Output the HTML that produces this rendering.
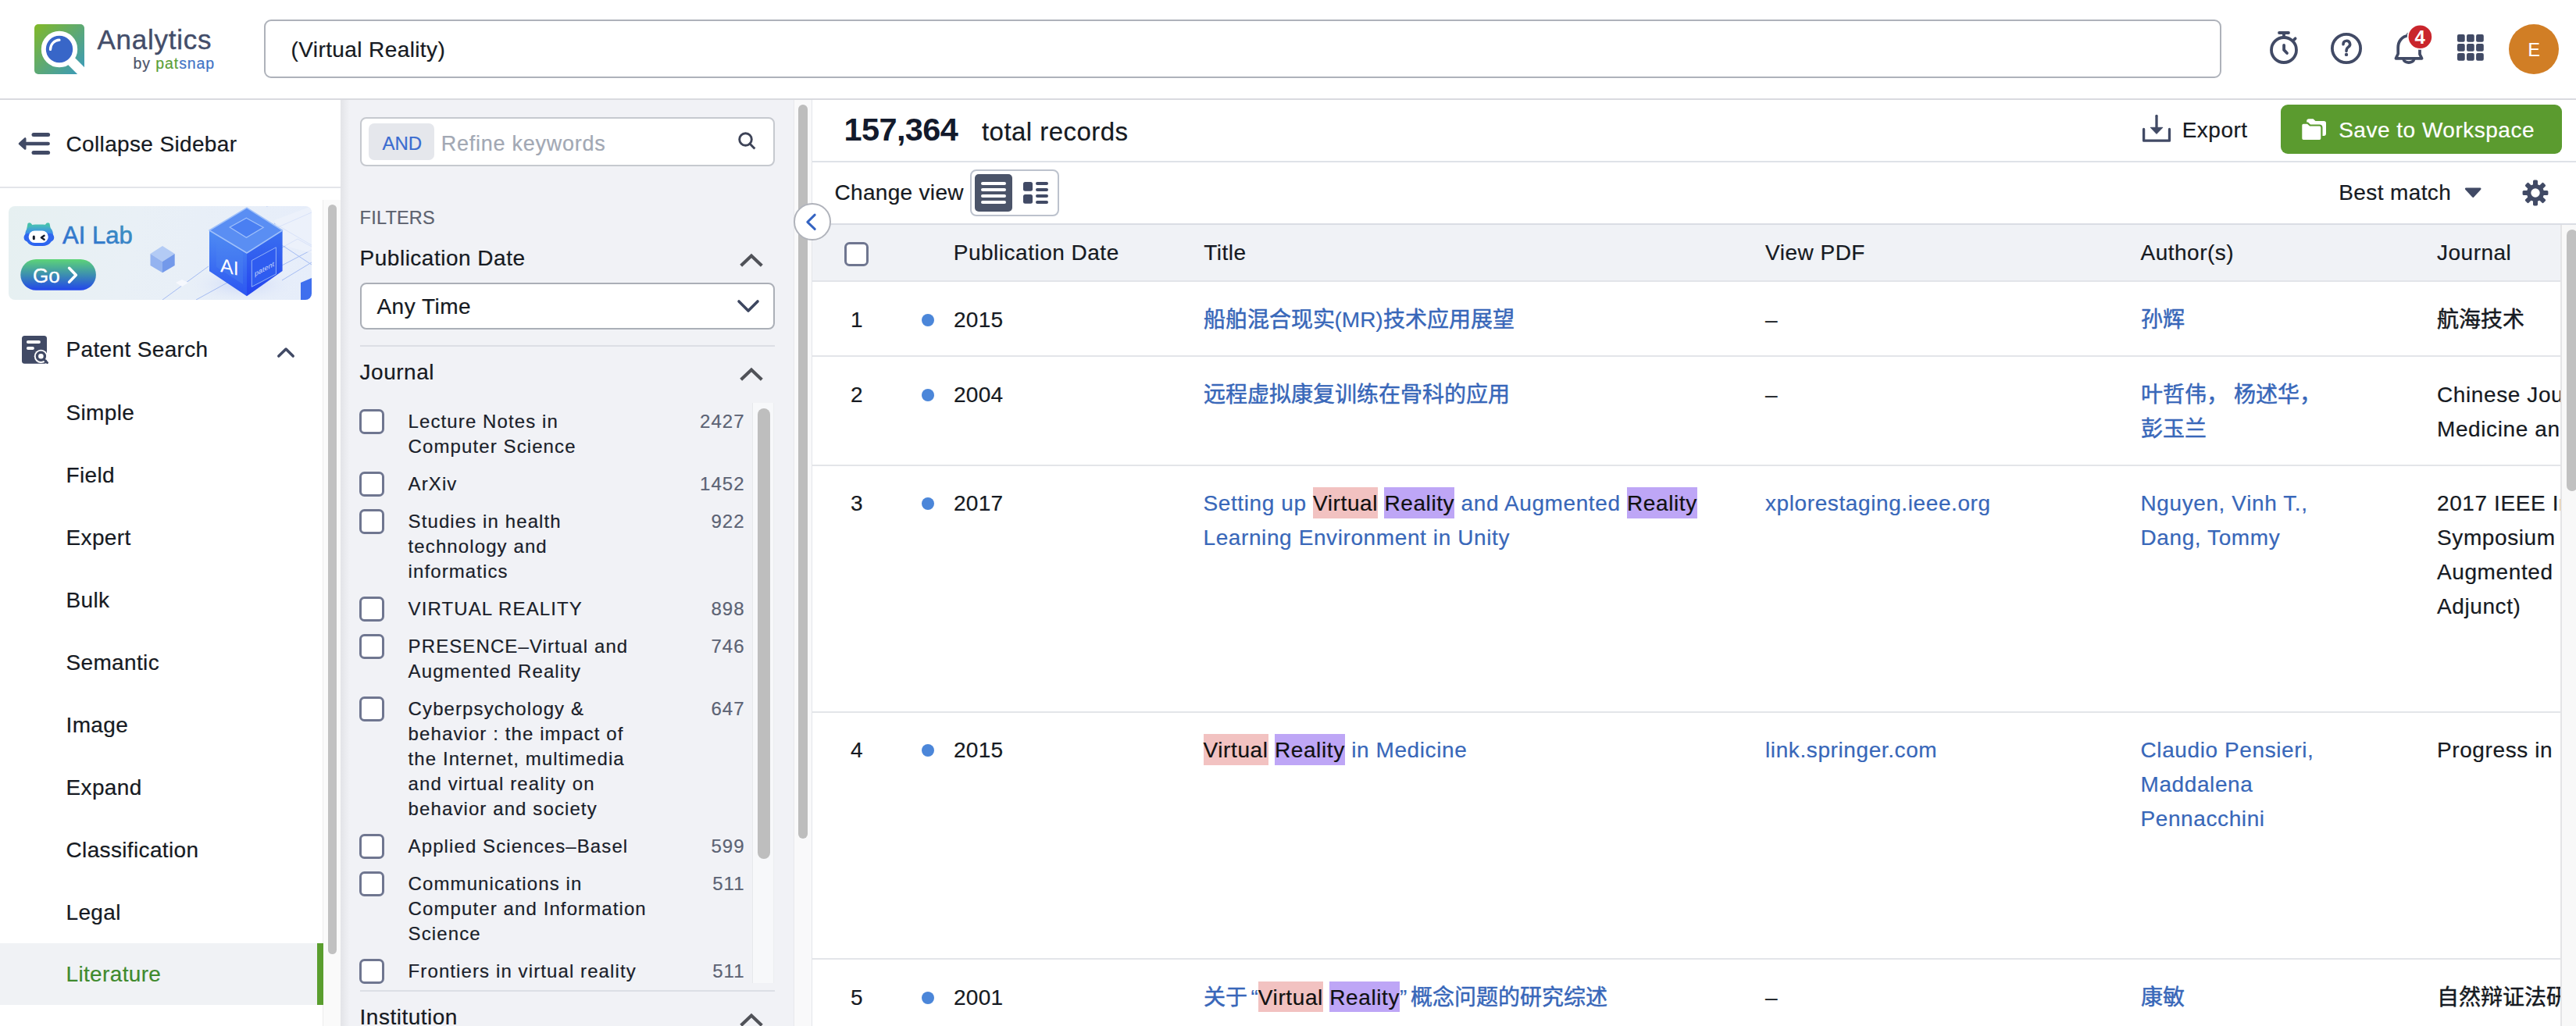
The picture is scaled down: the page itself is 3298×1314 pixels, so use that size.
<!DOCTYPE html><html lang="zh-CN"><head><meta charset="utf-8"><title>Analytics - Literature Search</title><style>*{margin:0;padding:0}
html,body{width:3298px;height:1314px;overflow:hidden;background:#fff}
body{position:relative;font-family:"Liberation Sans", sans-serif}
.a{position:absolute}
.cj{display:inline-block;width:28px;text-align:center;letter-spacing:0;-webkit-text-stroke-width:0.5px}
.t{position:absolute;white-space:nowrap;-webkit-text-stroke-width:0.2px}
.hp{background:#f2c2c1;color:#111;padding:5px 0 3.5px;letter-spacing:0.6px}
.hv{background:#bea6f6;color:#111;padding:5px 0 3.5px;letter-spacing:0.6px}
</style></head><body>
<div class="a" style="left:0px;top:0px;width:3298px;height:126px;background:#fff"></div>
<div class="a" style="left:0px;top:126px;width:3298px;height:2px;background:#d9dadf"></div>
<svg class="a" style="left:44px;top:31px;overflow:visible" width="64" height="64" viewBox="0 0 64 64">
<defs><linearGradient id="lg" x1="0" y1="0" x2="1" y2="1"><stop offset="0" stop-color="#82b927"/><stop offset="1" stop-color="#3899c0"/></linearGradient></defs>
<rect x="0" y="0" width="64" height="64" rx="5" fill="url(#lg)"/>
<line x1="36" y1="36" x2="72" y2="72" stroke="#fff" stroke-width="12.4"/>
<circle cx="32" cy="32" r="20.2" fill="#3866c8" stroke="#fff" stroke-width="6"/>
<path d="M20.5 32.5 A12 12 0 0 1 32 20.2" stroke="#fff" stroke-width="3.2" fill="none" stroke-linecap="round"/>
</svg>
<div class="a" style="left:108px;top:31px;width:20px;height:70px;background:#fff"></div>
<div class="t " style="left:124.5px;top:28.07px;font-size:35px;line-height:46px;color:#434d69;font-weight:400;letter-spacing:0.75px;-webkit-text-stroke:0.4px #434d69">Analytics</div>
<div class="t " style="left:170.6px;top:69.44px;font-size:19.5px;line-height:25px;color:#15181f;font-weight:400;letter-spacing:0.9px;"><span style="color:#4d546a">by </span><span style="color:#5c9f38">pat</span><span style="color:#4274c6">snap</span></div>
<div class="a" style="left:338px;top:25px;width:2506px;height:75px;box-sizing:border-box;border:2px solid #aeb2ba;border-radius:9px;background:#fff"></div>
<div class="t " style="left:372.5px;top:45.60px;font-size:28px;line-height:36px;color:#161a22;font-weight:400;letter-spacing:0.4px;">(Virtual Reality)</div>
<svg class="a" style="left:2900px;top:36px;" width="48" height="50" viewBox="0 0 48 50"><g fill="none" stroke="#414a65" stroke-width="3.8" stroke-linecap="round" stroke-linejoin="round">
<circle cx="24" cy="28" r="16"/><line x1="18" y1="6" x2="30" y2="6"/><line x1="24" y1="6" x2="24" y2="11"/>
<line x1="37" y1="14.8" x2="38.6" y2="13.3"/><polyline points="24.1,21.9 24.1,27.9 28,32"/></g></svg>
<svg class="a" style="left:2980px;top:38px;" width="48" height="48" viewBox="0 0 48 48"><g fill="none" stroke="#414a65" stroke-width="3.8" stroke-linecap="round">
<circle cx="24" cy="24" r="18.1"/><path d="M20 18.8 A4.3 4.3 0 1 1 26.3 22.4 C24.6 23.6 24 24.6 24 27.4" stroke-width="3.5"/></g>
<circle cx="24" cy="31.9" r="2.2" fill="#414a65"/></svg>
<svg class="a" style="left:3060px;top:30px;" width="60" height="60" viewBox="0 0 60 60"><g fill="none" stroke="#414a65" stroke-width="3.7" stroke-linecap="round" stroke-linejoin="round">
<path d="M10.2 39 L10.2 31 C10.2 22.5 15.5 16.5 23 15.6 L23 13.5 M23 15.6 C32 16.5 38 22 38 31 L38 39.5 L40.6 44.8 L7.4 44.8 L10.2 39"/>
<path d="M17.2 46 A6.8 4.9 0 0 0 30.6 46"/></g>
<circle cx="38.4" cy="17.2" r="16.6" fill="#fff"/><circle cx="38.4" cy="17.2" r="14.8" fill="#c9252c"/>
<text x="38.2" y="26" font-family="Liberation Sans" font-weight="700" font-size="24" fill="#fff" text-anchor="middle">4</text></svg>
<svg class="a" style="left:3146.2px;top:44px;" width="34" height="34" viewBox="0 0 34 34"><rect x="0.00" y="0.00" width="9.7" height="9.7" rx="2" fill="#414a65"/><rect x="12.05" y="0.00" width="9.7" height="9.7" rx="2" fill="#414a65"/><rect x="24.10" y="0.00" width="9.7" height="9.7" rx="2" fill="#414a65"/><rect x="0.00" y="12.05" width="9.7" height="9.7" rx="2" fill="#414a65"/><rect x="12.05" y="12.05" width="9.7" height="9.7" rx="2" fill="#414a65"/><rect x="24.10" y="12.05" width="9.7" height="9.7" rx="2" fill="#414a65"/><rect x="0.00" y="24.10" width="9.7" height="9.7" rx="2" fill="#414a65"/><rect x="12.05" y="24.10" width="9.7" height="9.7" rx="2" fill="#414a65"/><rect x="24.10" y="24.10" width="9.7" height="9.7" rx="2" fill="#414a65"/></svg>
<div class="a" style="left:3212px;top:30.5px;width:64px;height:64px;border-radius:50%;background:#d17e25"></div>
<div class="t " style="left:3236.5px;top:48.53px;font-size:23px;line-height:30px;color:#fff;font-weight:400;letter-spacing:0px;">E</div>
<div class="a" style="left:0px;top:128px;width:436px;height:1186px;background:#fff"></div>
<svg class="a" style="left:20px;top:160px;" width="50" height="50" viewBox="0 0 50 50"><g stroke="#414a65" stroke-linecap="round" fill="none">
<line x1="23" y1="12.5" x2="41.6" y2="12.5" stroke-width="5"/><line x1="14" y1="24" x2="41.6" y2="24" stroke-width="4.6"/>
<line x1="23" y1="35.5" x2="41.6" y2="35.5" stroke-width="5"/></g>
<path d="M5 24 L12.2 17.5 L12.2 30.5 Z" fill="#414a65" stroke="#414a65" stroke-width="2.6" stroke-linejoin="round"/></svg>
<div class="t " style="left:84.5px;top:166.50px;font-size:28px;line-height:36px;color:#161a22;font-weight:400;letter-spacing:0.35px;">Collapse Sidebar</div>
<div class="a" style="left:0px;top:239px;width:436px;height:2px;background:#e3e5ea"></div>
<div class="a" style="left:11px;top:264px;width:388px;height:120px;border-radius:8px;overflow:hidden;background:linear-gradient(100deg,#e6f0f1 0%,#e9f0f6 40%,#e6edfa 100%)">
<svg width="388" height="120" viewBox="0 0 388 120" style="position:absolute;left:0;top:0">
<defs>
<linearGradient id="cl" x1="0" y1="0" x2="0" y2="1"><stop offset="0" stop-color="#4f8cf3"/><stop offset="1" stop-color="#2b55f1"/></linearGradient>
<linearGradient id="cr" x1="0" y1="0" x2="0" y2="1"><stop offset="0" stop-color="#3a70f0"/><stop offset="1" stop-color="#2444ee"/></linearGradient>
<linearGradient id="al" x1="0" y1="1" x2="1" y2="0"><stop offset="0" stop-color="#2d6bd3"/><stop offset="1" stop-color="#3d96bd"/></linearGradient>
<linearGradient id="go" x1="0" y1="0" x2="0" y2="1"><stop offset="0" stop-color="#5dd477"/><stop offset="0.45" stop-color="#3f96aa"/><stop offset="1" stop-color="#2245ec"/></linearGradient>
<linearGradient id="rb" x1="0" y1="0" x2="0" y2="1"><stop offset="0" stop-color="#49c2b4"/><stop offset="0.45" stop-color="#3a86ef"/><stop offset="1" stop-color="#2a5ef0"/></linearGradient>
<radialGradient id="sh" cx="0.5" cy="0.5" r="0.5"><stop offset="0" stop-color="#c9d6f7"/><stop offset="1" stop-color="#e8eefa" stop-opacity="0"/></radialGradient>
</defs>
<ellipse cx="300" cy="100" rx="70" ry="25" fill="url(#sh)"/>
<g stroke="#8eaaf0" stroke-width="1" fill="none" opacity="0.75">
<path d="M197 120 L256 77"/><path d="M240 120 L280 98"/><path d="M330 0 L388 -10 M338 30 L388 8"/><path d="M340 22 L388 50"/>
<path d="M334 62 L370 42 L388 52 M346 78 L388 56 M350 95 L388 72"/><path d="M350 50 L388 75"/>
</g>
<path d="M214 98 L222 94 L230 98 L222 103 Z" fill="#f6f8fd"/>
<path d="M340 18 L388 0 L388 60 L350 50 Z" fill="#eef2fb" opacity="0.7"/>
<!-- big cube -->
<path d="M305 2.2 L350.6 31 L305 60 L257 31 Z" fill="#5a8ef3"/>
<path d="M257 31 L305 60 L305 115.2 L257 83.3 Z" fill="url(#cl)"/>
<path d="M305 60 L350.6 31 L350.6 83 L305 115.2 Z" fill="url(#cr)"/>
<path d="M305 2.2 L350.6 31 L305 60 L257 31 Z" fill="none" stroke="#9ec0fa" stroke-width="1.5" stroke-linejoin="round"/>
<path d="M304.4 15.3 L326.2 27.2 L304.4 40.3 L283.2 27 Z" fill="#4a7ff2" stroke="#9fc0fa" stroke-width="1.2"/>
<path d="M266 38 L300 60 L300 100 L266 78 Z" fill="#4c86f2" opacity="0.35"/>
<text x="0" y="0" font-family="Liberation Sans" font-size="25" fill="#fff" transform="translate(271 84) skewY(12)">AI</text>
<path d="M311.3 69.6 L342.4 52.8 L342.4 87 L311.3 103.3 Z" fill="#2f5cf0" stroke="#93b2f7" stroke-width="1"/>
<text x="0" y="0" font-family="Liberation Sans" font-size="9" fill="#c9d9fb" transform="translate(315 90) skewY(-28)">patent</text>
<!-- small cube -->
<path d="M197 50.9 L212.7 61 L197 70.9 L181.5 60.9 Z" fill="#b3cbf5"/>
<path d="M181.5 60.9 L197 70.9 L197 85.2 L181.5 75.9 Z" fill="#94b3f0"/>
<path d="M197 70.9 L212.7 61 L212.7 76 L197 85.2 Z" fill="#7399ea"/>
<path d="M374 98 L388 92 L388 120 L374 120 Z" fill="#3f6fee"/>
<!-- robot -->
<path d="M23 30 L24.5 22.5 Q26 20.2 28.5 21.8 L32 26 Z" fill="#46c0ac"/><path d="M54 30 L52.5 22.5 Q51 20.2 48.5 21.8 L45 26 Z" fill="#46c0ac"/>
<rect x="21.2" y="23.6" width="35.8" height="27.4" rx="13" fill="url(#rb)"/>
<rect x="19.6" y="35" width="38.6" height="10.5" rx="5" fill="#2f66ee"/>
<rect x="25.7" y="31.6" width="25" height="15.4" rx="7.6" fill="#fff"/>
<rect x="30.8" y="37.4" width="3" height="5.8" rx="1.5" fill="#141c2c"/>
<path d="M45.6 37.8 L41.9 40.3 L45.6 42.8" stroke="#141c2c" stroke-width="2.4" fill="none" stroke-linecap="round" stroke-linejoin="round"/>
<text x="69" y="48" font-family="Liberation Sans" font-size="31" font-weight="400" fill="url(#al)" stroke="url(#al)" stroke-width="0.6">AI Lab</text>
<rect x="15.3" y="68" width="96.6" height="39.8" rx="19.9" fill="url(#go)"/>
<text x="31" y="97.7" font-family="Liberation Sans" font-size="26" font-weight="400" fill="#fff" stroke="#fff" stroke-width="0.35">Go</text>
<path d="M77.6 79.3 L86.3 88.3 L77.6 97.3" stroke="#fff" stroke-width="3.6" fill="none" stroke-linecap="round" stroke-linejoin="round"/>
</svg></div>
<div class="a" style="left:413px;top:256px;width:23px;height:1058px;background:#fafafa;border-left:1px solid #ececec;box-sizing:border-box"></div>
<div class="a" style="left:419.5px;top:262px;width:11px;height:960px;background:#c1c1c1;border-radius:6px"></div>
<svg class="a" style="left:26px;top:428px;" width="40" height="40" viewBox="0 0 40 40"><rect x="2" y="2" width="32" height="35.8" rx="3.5" fill="#414a65"/>
<line x1="9.9" y1="9.9" x2="23.9" y2="9.9" stroke="#fff" stroke-width="4" stroke-linecap="round"/>
<line x1="9.9" y1="18" x2="15.9" y2="18" stroke="#fff" stroke-width="4" stroke-linecap="round"/>
<circle cx="26.4" cy="28.3" r="8.6" fill="#fff"/><circle cx="26.4" cy="28.3" r="5" fill="none" stroke="#414a65" stroke-width="3.4"/>
<line x1="30.5" y1="32.5" x2="34.5" y2="36.5" stroke="#414a65" stroke-width="3" stroke-linecap="round"/></svg>
<div class="t " style="left:84.5px;top:430.30px;font-size:28px;line-height:36px;color:#161a22;font-weight:400;letter-spacing:0.35px;">Patent Search</div>
<svg class="a" style="left:350px;top:440px;" width="30" height="22" viewBox="0 0 30 22"><polyline points="6.8,16.1 16.1,7 25.2,16.1" fill="none" stroke="#414a65" stroke-width="3.5" stroke-linecap="round" stroke-linejoin="round"/></svg>
<div class="t " style="left:84.5px;top:510.60px;font-size:28px;line-height:36px;color:#161a22;font-weight:400;letter-spacing:0.35px;">Simple</div>
<div class="t " style="left:84.5px;top:590.60px;font-size:28px;line-height:36px;color:#161a22;font-weight:400;letter-spacing:0.35px;">Field</div>
<div class="t " style="left:84.5px;top:670.60px;font-size:28px;line-height:36px;color:#161a22;font-weight:400;letter-spacing:0.35px;">Expert</div>
<div class="t " style="left:84.5px;top:750.60px;font-size:28px;line-height:36px;color:#161a22;font-weight:400;letter-spacing:0.35px;">Bulk</div>
<div class="t " style="left:84.5px;top:830.60px;font-size:28px;line-height:36px;color:#161a22;font-weight:400;letter-spacing:0.35px;">Semantic</div>
<div class="t " style="left:84.5px;top:910.60px;font-size:28px;line-height:36px;color:#161a22;font-weight:400;letter-spacing:0.35px;">Image</div>
<div class="t " style="left:84.5px;top:990.60px;font-size:28px;line-height:36px;color:#161a22;font-weight:400;letter-spacing:0.35px;">Expand</div>
<div class="t " style="left:84.5px;top:1070.60px;font-size:28px;line-height:36px;color:#161a22;font-weight:400;letter-spacing:0.35px;">Classification</div>
<div class="t " style="left:84.5px;top:1150.60px;font-size:28px;line-height:36px;color:#161a22;font-weight:400;letter-spacing:0.35px;">Legal</div>
<div class="a" style="left:0px;top:1208px;width:413px;height:79px;background:#f0f2f5"></div>
<div class="a" style="left:406px;top:1208px;width:8px;height:79px;background:#5a9e2e"></div>
<div class="t " style="left:84.5px;top:1229.80px;font-size:28px;line-height:36px;color:#3f8a2d;font-weight:400;letter-spacing:0.35px;">Literature</div>
<div class="a" style="left:436px;top:128px;width:580px;height:1186px;background:#f1f2f6"></div>
<div class="a" style="left:436px;top:128px;width:12px;height:1186px;background:linear-gradient(90deg,#e3e4e8,#f1f2f6)"></div>
<div class="a" style="left:460.5px;top:149.8px;width:531px;height:63.6px;box-sizing:border-box;border:2px solid #c6c9cf;border-radius:8px;background:#fff"></div>
<div class="a" style="left:472px;top:158.3px;width:83.7px;height:47px;background:#e5e7ec;border-radius:7px"></div>
<div class="t " style="left:489.5px;top:167.78px;font-size:24px;line-height:31px;color:#3b6cd0;font-weight:400;letter-spacing:0px;">AND</div>
<div class="t " style="left:564.7px;top:166.64px;font-size:27px;line-height:35px;color:#a2a8b4;font-weight:400;letter-spacing:0.75px;">Refine keywords</div>
<svg class="a" style="left:940px;top:166px;" width="30" height="28" viewBox="0 0 30 28"><circle cx="14.5" cy="12.5" r="7.8" fill="none" stroke="#3d4357" stroke-width="2.9"/><line x1="20.2" y1="18.3" x2="25.3" y2="23.4" stroke="#3d4357" stroke-width="2.9" stroke-linecap="square"/></svg>
<div class="t " style="left:460.6px;top:264.06px;font-size:23.5px;line-height:31px;color:#5c616e;font-weight:400;letter-spacing:0.2px;">FILTERS</div>
<div class="t " style="left:460.6px;top:313.00px;font-size:28px;line-height:36px;color:#161a22;font-weight:400;letter-spacing:0.5px;">Publication Date</div>
<svg class="a" style="left:945px;top:322px;" width="34" height="22" viewBox="0 0 34 22"><polyline points="5.2,16.8 17,5.6 28.8,16.8" fill="none" stroke="#505258" stroke-width="4.2" stroke-linecap="square"/></svg>
<div class="a" style="left:460.5px;top:361.6px;width:531px;height:60px;box-sizing:border-box;border:2px solid #abafb7;border-radius:8px;background:#fff"></div>
<div class="t " style="left:482.4px;top:374.80px;font-size:28px;line-height:36px;color:#161a22;font-weight:400;letter-spacing:0.5px;">Any Time</div>
<svg class="a" style="left:940px;top:380px;" width="36" height="24" viewBox="0 0 36 24"><polyline points="6,6 18,18 30,6" fill="none" stroke="#3d4760" stroke-width="3.6" stroke-linecap="round" stroke-linejoin="round"/></svg>
<div class="a" style="left:460.5px;top:442px;width:531px;height:2px;background:#dcdfe5"></div>
<div class="t " style="left:460.6px;top:458.50px;font-size:28px;line-height:36px;color:#161a22;font-weight:400;letter-spacing:0.5px;">Journal</div>
<svg class="a" style="left:945px;top:468px;" width="34" height="22" viewBox="0 0 34 22"><polyline points="5.2,16.8 17,5.6 28.8,16.8" fill="none" stroke="#505258" stroke-width="4.2" stroke-linecap="square"/></svg>
<div class="a" style="left:963px;top:516px;width:28px;height:743px;background:#f7f8fa;border-left:1px solid #e6e8ec;border-right:1px solid #eceef1;box-sizing:border-box"></div>
<div class="a" style="left:970.3px;top:523px;width:15.5px;height:577px;background:#bebebe;border-radius:8px"></div>
<div class="a" style="left:460.3px;top:524.2px;width:31.5px;height:31.5px;box-sizing:border-box;border:3.5px solid #6f7690;border-radius:6.5px;background:#fff"></div>
<div class="t " style="left:522.6px;top:524.38px;font-size:24px;line-height:31px;color:#1a1e2a;font-weight:400;letter-spacing:1.1px;">Lecture Notes in</div>
<div class="t " style="left:522.6px;top:556.38px;font-size:24px;line-height:31px;color:#1a1e2a;font-weight:400;letter-spacing:1.1px;">Computer Science</div>
<div class="t" style="right:2344.5px;top:524.38px;font-size:24px;line-height:31px;color:#5c6374;font-weight:400;letter-spacing:1.0px;text-align:right;">2427</div>
<div class="a" style="left:460.3px;top:604.2px;width:31.5px;height:31.5px;box-sizing:border-box;border:3.5px solid #6f7690;border-radius:6.5px;background:#fff"></div>
<div class="t " style="left:522.6px;top:604.38px;font-size:24px;line-height:31px;color:#1a1e2a;font-weight:400;letter-spacing:1.1px;">ArXiv</div>
<div class="t" style="right:2344.5px;top:604.38px;font-size:24px;line-height:31px;color:#5c6374;font-weight:400;letter-spacing:1.0px;text-align:right;">1452</div>
<div class="a" style="left:460.3px;top:652.2px;width:31.5px;height:31.5px;box-sizing:border-box;border:3.5px solid #6f7690;border-radius:6.5px;background:#fff"></div>
<div class="t " style="left:522.6px;top:652.38px;font-size:24px;line-height:31px;color:#1a1e2a;font-weight:400;letter-spacing:1.1px;">Studies in health</div>
<div class="t " style="left:522.6px;top:684.38px;font-size:24px;line-height:31px;color:#1a1e2a;font-weight:400;letter-spacing:1.1px;">technology and</div>
<div class="t " style="left:522.6px;top:716.38px;font-size:24px;line-height:31px;color:#1a1e2a;font-weight:400;letter-spacing:1.1px;">informatics</div>
<div class="t" style="right:2344.5px;top:652.38px;font-size:24px;line-height:31px;color:#5c6374;font-weight:400;letter-spacing:1.0px;text-align:right;">922</div>
<div class="a" style="left:460.3px;top:764.2px;width:31.5px;height:31.5px;box-sizing:border-box;border:3.5px solid #6f7690;border-radius:6.5px;background:#fff"></div>
<div class="t " style="left:522.6px;top:764.38px;font-size:24px;line-height:31px;color:#1a1e2a;font-weight:400;letter-spacing:1.1px;">VIRTUAL REALITY</div>
<div class="t" style="right:2344.5px;top:764.38px;font-size:24px;line-height:31px;color:#5c6374;font-weight:400;letter-spacing:1.0px;text-align:right;">898</div>
<div class="a" style="left:460.3px;top:812.2px;width:31.5px;height:31.5px;box-sizing:border-box;border:3.5px solid #6f7690;border-radius:6.5px;background:#fff"></div>
<div class="t " style="left:522.6px;top:812.38px;font-size:24px;line-height:31px;color:#1a1e2a;font-weight:400;letter-spacing:1.1px;">PRESENCE–Virtual and</div>
<div class="t " style="left:522.6px;top:844.38px;font-size:24px;line-height:31px;color:#1a1e2a;font-weight:400;letter-spacing:1.1px;">Augmented Reality</div>
<div class="t" style="right:2344.5px;top:812.38px;font-size:24px;line-height:31px;color:#5c6374;font-weight:400;letter-spacing:1.0px;text-align:right;">746</div>
<div class="a" style="left:460.3px;top:892.2px;width:31.5px;height:31.5px;box-sizing:border-box;border:3.5px solid #6f7690;border-radius:6.5px;background:#fff"></div>
<div class="t " style="left:522.6px;top:892.38px;font-size:24px;line-height:31px;color:#1a1e2a;font-weight:400;letter-spacing:1.1px;">Cyberpsychology &amp;</div>
<div class="t " style="left:522.6px;top:924.38px;font-size:24px;line-height:31px;color:#1a1e2a;font-weight:400;letter-spacing:1.1px;">behavior : the impact of</div>
<div class="t " style="left:522.6px;top:956.38px;font-size:24px;line-height:31px;color:#1a1e2a;font-weight:400;letter-spacing:1.1px;">the Internet, multimedia</div>
<div class="t " style="left:522.6px;top:988.38px;font-size:24px;line-height:31px;color:#1a1e2a;font-weight:400;letter-spacing:1.1px;">and virtual reality on</div>
<div class="t " style="left:522.6px;top:1020.38px;font-size:24px;line-height:31px;color:#1a1e2a;font-weight:400;letter-spacing:1.1px;">behavior and society</div>
<div class="t" style="right:2344.5px;top:892.38px;font-size:24px;line-height:31px;color:#5c6374;font-weight:400;letter-spacing:1.0px;text-align:right;">647</div>
<div class="a" style="left:460.3px;top:1068.2px;width:31.5px;height:31.5px;box-sizing:border-box;border:3.5px solid #6f7690;border-radius:6.5px;background:#fff"></div>
<div class="t " style="left:522.6px;top:1068.38px;font-size:24px;line-height:31px;color:#1a1e2a;font-weight:400;letter-spacing:1.1px;">Applied Sciences–Basel</div>
<div class="t" style="right:2344.5px;top:1068.38px;font-size:24px;line-height:31px;color:#5c6374;font-weight:400;letter-spacing:1.0px;text-align:right;">599</div>
<div class="a" style="left:460.3px;top:1116.2px;width:31.5px;height:31.5px;box-sizing:border-box;border:3.5px solid #6f7690;border-radius:6.5px;background:#fff"></div>
<div class="t " style="left:522.6px;top:1116.38px;font-size:24px;line-height:31px;color:#1a1e2a;font-weight:400;letter-spacing:1.1px;">Communications in</div>
<div class="t " style="left:522.6px;top:1148.38px;font-size:24px;line-height:31px;color:#1a1e2a;font-weight:400;letter-spacing:1.1px;">Computer and Information</div>
<div class="t " style="left:522.6px;top:1180.38px;font-size:24px;line-height:31px;color:#1a1e2a;font-weight:400;letter-spacing:1.1px;">Science</div>
<div class="t" style="right:2344.5px;top:1116.38px;font-size:24px;line-height:31px;color:#5c6374;font-weight:400;letter-spacing:1.0px;text-align:right;">511</div>
<div class="a" style="left:460.3px;top:1228.2px;width:31.5px;height:31.5px;box-sizing:border-box;border:3.5px solid #6f7690;border-radius:6.5px;background:#fff"></div>
<div class="t " style="left:522.6px;top:1228.38px;font-size:24px;line-height:31px;color:#1a1e2a;font-weight:400;letter-spacing:1.1px;">Frontiers in virtual reality</div>
<div class="t" style="right:2344.5px;top:1228.38px;font-size:24px;line-height:31px;color:#5c6374;font-weight:400;letter-spacing:1.0px;text-align:right;">511</div>
<div class="a" style="left:460.5px;top:1268px;width:531px;height:2px;background:#dcdfe5"></div>
<div class="t " style="left:460.6px;top:1284.80px;font-size:28px;line-height:36px;color:#161a22;font-weight:400;letter-spacing:0.5px;">Institution</div>
<svg class="a" style="left:945px;top:1294.5px;" width="34" height="22" viewBox="0 0 34 22"><polyline points="5.2,16.8 17,5.6 28.8,16.8" fill="none" stroke="#505258" stroke-width="4.2" stroke-linecap="square"/></svg>
<div class="a" style="left:1016px;top:128px;width:24px;height:1186px;background:#f9f9fa;border-left:1px solid #e8e9ec;border-right:1px solid #e4e6ea;box-sizing:border-box"></div>
<div class="a" style="left:1022px;top:134px;width:12px;height:940px;background:#bdbdbd;border-radius:6px"></div>
<div class="a" style="left:1040px;top:128px;width:2258px;height:1186px;background:#fff"></div>
<div class="t " style="left:1080.5px;top:139.02px;font-size:41.5px;line-height:54px;color:#131a2c;font-weight:700;letter-spacing:-0.6px;-webkit-text-stroke-width:0">157,364</div>
<div class="t " style="left:1257px;top:147.47px;font-size:33px;line-height:43px;color:#161a22;font-weight:400;letter-spacing:0.45px;">total records</div>
<svg class="a" style="left:2738px;top:144px;" width="46" height="42" viewBox="0 0 46 42"><g fill="none" stroke="#414a65" stroke-width="3.3" stroke-linecap="round" stroke-linejoin="round">
<path d="M6.6 21.5 L6.6 36.2 L39.5 36.2 L39.5 21.5"/><line x1="23" y1="4.3" x2="23" y2="20"/></g>
<path d="M15.2 19.3 L30.9 19.3 L23 27.4 Z" fill="#414a65" stroke="#414a65" stroke-width="1" stroke-linejoin="round"/></svg>
<div class="t " style="left:2793.7px;top:148.60px;font-size:28px;line-height:36px;color:#161a22;font-weight:400;letter-spacing:0.5px;">Export</div>
<div class="a" style="left:2920px;top:134px;width:359.6px;height:63.2px;background:#5b9b2f;border-radius:9px"></div>
<svg class="a" style="left:2944px;top:149px;" width="38" height="34" viewBox="0 0 38 34"><path d="M9.2 6 Q9.2 3.2 12 3.2 L17.5 3.2 L20.5 6 L31.2 6 Q34 6 34 8.8 L34 22 Q34 24.9 31.2 24.9 L12 24.9 Q9.2 24.9 9.2 22 Z" fill="#fff"/>
<path d="M2.2 11.5 Q2.2 8.7 5 8.7 L10.5 8.7 L13.5 11.5 L25.6 11.5 Q28.4 11.5 28.4 14.3 L28.4 28.2 Q28.4 31 25.6 31 L5 31 Q2.2 31 2.2 28.2 Z" fill="#fff" stroke="#5b9b2f" stroke-width="2.2"/></svg>
<div class="t " style="left:2994.2px;top:148.60px;font-size:28px;line-height:36px;color:#fff;font-weight:400;letter-spacing:0.5px;">Save to Workspace</div>
<div class="a" style="left:1040px;top:206px;width:2258px;height:2px;background:#dfe2e8"></div>
<div class="t " style="left:1068.6px;top:228.80px;font-size:28px;line-height:36px;color:#161a22;font-weight:400;letter-spacing:0.3px;">Change view</div>
<div class="a" style="left:1242.3px;top:217px;width:113.3px;height:59.5px;box-sizing:border-box;border:2px solid #bcc2cd;border-radius:8px;background:#fff"></div>
<div class="a" style="left:1248px;top:223px;width:47.7px;height:48px;background:#4b5469;border-radius:5px"></div>
<svg class="a" style="left:1248px;top:223px;" width="48" height="48" viewBox="0 0 48 48"><rect x="8" y="10.0" width="32" height="4" rx="2" fill="#fff"/><rect x="8" y="18.0" width="32" height="4" rx="2" fill="#fff"/><rect x="8" y="26.0" width="32" height="4" rx="2" fill="#fff"/><rect x="8" y="34.0" width="32" height="4" rx="2" fill="#fff"/></svg>
<svg class="a" style="left:1308px;top:230px;" width="40" height="34" viewBox="0 0 40 34"><rect x="2" y="3" width="12" height="11.7" rx="2.5" fill="#414a65"/><rect x="2" y="19.1" width="12" height="11.7" rx="2.5" fill="#414a65"/>
<rect x="18" y="2.9" width="16" height="4" rx="2" fill="#414a65"/><rect x="18" y="10.9" width="16" height="4" rx="2" fill="#414a65"/>
<rect x="18" y="18.9" width="16" height="4" rx="2" fill="#414a65"/><rect x="18" y="27" width="16" height="4" rx="2" fill="#414a65"/></svg>
<div class="t " style="left:2994.2px;top:229.10px;font-size:28px;line-height:36px;color:#161a22;font-weight:400;letter-spacing:0.4px;">Best match</div>
<svg class="a" style="left:3152px;top:236px;" width="28" height="20" viewBox="0 0 28 20"><path d="M5.2 5.8 L23.2 5.8 L14.2 15.6 Z" fill="#414a65" stroke="#414a65" stroke-width="2.6" stroke-linejoin="round"/></svg>
<svg class="a" style="left:3226px;top:227px;" width="40" height="40" viewBox="0 0 40 40"><g fill="#414a65"><rect x="17" y="3.6" width="6" height="9" rx="1.6" transform="rotate(0 20 20)"/><rect x="17" y="3.6" width="6" height="9" rx="1.6" transform="rotate(45 20 20)"/><rect x="17" y="3.6" width="6" height="9" rx="1.6" transform="rotate(90 20 20)"/><rect x="17" y="3.6" width="6" height="9" rx="1.6" transform="rotate(135 20 20)"/><rect x="17" y="3.6" width="6" height="9" rx="1.6" transform="rotate(180 20 20)"/><rect x="17" y="3.6" width="6" height="9" rx="1.6" transform="rotate(225 20 20)"/><rect x="17" y="3.6" width="6" height="9" rx="1.6" transform="rotate(270 20 20)"/><rect x="17" y="3.6" width="6" height="9" rx="1.6" transform="rotate(315 20 20)"/></g><circle cx="20" cy="20" r="8.4" fill="none" stroke="#414a65" stroke-width="5.4"/></svg>
<div class="a" style="left:1040px;top:286px;width:2258px;height:2px;background:#dadde4"></div>
<div class="a" style="left:1040px;top:288px;width:2238px;height:72px;background:#f0f2f6"></div>
<div class="a" style="left:1040px;top:359px;width:2238px;height:2px;background:#e2e4e9"></div>
<div class="a" style="left:1080.5px;top:309.5px;width:31.5px;height:31.5px;box-sizing:border-box;border:3.5px solid #6f7690;border-radius:6.5px;background:#fff"></div>
<div class="t " style="left:1220.8px;top:306.30px;font-size:28px;line-height:36px;color:#161a22;font-weight:400;letter-spacing:0.5px;">Publication Date</div>
<div class="t " style="left:1541.2px;top:306.30px;font-size:28px;line-height:36px;color:#161a22;font-weight:400;letter-spacing:0.5px;">Title</div>
<div class="t " style="left:2260px;top:306.30px;font-size:28px;line-height:36px;color:#161a22;font-weight:400;letter-spacing:0.5px;">View PDF</div>
<div class="t " style="left:2740.5px;top:306.30px;font-size:28px;line-height:36px;color:#161a22;font-weight:400;letter-spacing:0.5px;">Author(s)</div>
<div class="t " style="left:3120px;top:306.30px;font-size:28px;line-height:36px;color:#161a22;font-weight:400;letter-spacing:0.5px;">Journal</div>
<div class="a" style="left:1040px;top:361px;width:2238px;height:953px;overflow:hidden">
<div class="t " style="left:49px;top:26.50px;font-size:28px;line-height:44px;color:#161a22;font-weight:400;letter-spacing:0px;">1</div>
<div class="a" style="left:140px;top:40.89999999999998px;width:16px;height:16px;border-radius:50%;background:#4b86d9"></div>
<div class="t " style="left:181px;top:26.50px;font-size:28px;line-height:44px;color:#161a22;font-weight:400;letter-spacing:0.3px;">2015</div>
<div class="t " style="left:500.5px;top:26.50px;font-size:28px;line-height:44px;color:#3867b9;font-weight:400;letter-spacing:0px;"><span class="cj">船</span><span class="cj">舶</span><span class="cj">混</span><span class="cj">合</span><span class="cj">现</span><span class="cj">实</span>(MR)<span class="cj">技</span><span class="cj">术</span><span class="cj">应</span><span class="cj">用</span><span class="cj">展</span><span class="cj">望</span></div>
<div class="t " style="left:1220px;top:26.50px;font-size:28px;line-height:44px;color:#161a22;font-weight:400;letter-spacing:0.6px;">–</div>
<div class="t " style="left:1700.5px;top:26.50px;font-size:28px;line-height:44px;color:#3867b9;font-weight:400;letter-spacing:0px;"><span class="cj">孙</span><span class="cj">辉</span></div>
<div class="t " style="left:2080px;top:26.50px;font-size:28px;line-height:44px;color:#161a22;font-weight:400;letter-spacing:0px;"><span class="cj">航</span><span class="cj">海</span><span class="cj">技</span><span class="cj">术</span></div>
<div class="a" style="left:0px;top:94px;width:2238px;height:2px;background:#e3e5e9"></div>
<div class="t " style="left:49px;top:122.50px;font-size:28px;line-height:44px;color:#161a22;font-weight:400;letter-spacing:0px;">2</div>
<div class="a" style="left:140px;top:136.90000000000003px;width:16px;height:16px;border-radius:50%;background:#4b86d9"></div>
<div class="t " style="left:181px;top:122.50px;font-size:28px;line-height:44px;color:#161a22;font-weight:400;letter-spacing:0.3px;">2004</div>
<div class="t " style="left:500.5px;top:122.50px;font-size:28px;line-height:44px;color:#3867b9;font-weight:400;letter-spacing:0px;"><span class="cj">远</span><span class="cj">程</span><span class="cj">虚</span><span class="cj">拟</span><span class="cj">康</span><span class="cj">复</span><span class="cj">训</span><span class="cj">练</span><span class="cj">在</span><span class="cj">骨</span><span class="cj">科</span><span class="cj">的</span><span class="cj">应</span><span class="cj">用</span></div>
<div class="t " style="left:1220px;top:122.50px;font-size:28px;line-height:44px;color:#161a22;font-weight:400;letter-spacing:0.6px;">–</div>
<div class="t " style="left:1700.5px;top:122.50px;font-size:28px;line-height:44px;color:#3867b9;font-weight:400;letter-spacing:0px;"><span class="cj">叶</span><span class="cj">哲</span><span class="cj">伟</span><span class="cj">，</span>&nbsp;<span class="cj">杨</span><span class="cj">述</span><span class="cj">华</span><span class="cj">，</span></div>
<div class="t " style="left:1700.5px;top:166.50px;font-size:28px;line-height:44px;color:#3867b9;font-weight:400;letter-spacing:0px;"><span class="cj">彭</span><span class="cj">玉</span><span class="cj">兰</span></div>
<div class="t " style="left:2080px;top:122.50px;font-size:28px;line-height:44px;color:#161a22;font-weight:400;letter-spacing:0.6px;">Chinese Journal of Clinical</div>
<div class="t " style="left:2080px;top:166.50px;font-size:28px;line-height:44px;color:#161a22;font-weight:400;letter-spacing:0.6px;">Medicine and Rehabilitation</div>
<div class="a" style="left:0px;top:233.5px;width:2238px;height:2px;background:#e3e5e9"></div>
<div class="t " style="left:49px;top:262.00px;font-size:28px;line-height:44px;color:#161a22;font-weight:400;letter-spacing:0px;">3</div>
<div class="a" style="left:140px;top:276.4000000000001px;width:16px;height:16px;border-radius:50%;background:#4b86d9"></div>
<div class="t " style="left:181px;top:262.00px;font-size:28px;line-height:44px;color:#161a22;font-weight:400;letter-spacing:0.3px;">2017</div>
<div class="t " style="left:500.5px;top:262.00px;font-size:28px;line-height:44px;color:#3867b9;font-weight:400;letter-spacing:0.6px;">Setting up <span class="hp">Virtual</span> <span class="hv">Reality</span> and Augmented <span class="hv">Reality</span></div>
<div class="t " style="left:500.5px;top:306.00px;font-size:28px;line-height:44px;color:#3867b9;font-weight:400;letter-spacing:0.6px;">Learning Environment in Unity</div>
<div class="t " style="left:1220px;top:262.00px;font-size:28px;line-height:44px;color:#3867b9;font-weight:400;letter-spacing:0.6px;">xplorestaging.ieee.org</div>
<div class="t " style="left:1700.5px;top:262.00px;font-size:28px;line-height:44px;color:#3867b9;font-weight:400;letter-spacing:0.6px;">Nguyen, Vinh T.,</div>
<div class="t " style="left:1700.5px;top:306.00px;font-size:28px;line-height:44px;color:#3867b9;font-weight:400;letter-spacing:0.6px;">Dang, Tommy</div>
<div class="t " style="left:2080px;top:262.00px;font-size:28px;line-height:44px;color:#161a22;font-weight:400;letter-spacing:0.6px;">2017 IEEE International</div>
<div class="t " style="left:2080px;top:306.00px;font-size:28px;line-height:44px;color:#161a22;font-weight:400;letter-spacing:0.6px;">Symposium on Mixed and</div>
<div class="t " style="left:2080px;top:350.00px;font-size:28px;line-height:44px;color:#161a22;font-weight:400;letter-spacing:0.6px;">Augmented Reality (ISMAR-</div>
<div class="t " style="left:2080px;top:394.00px;font-size:28px;line-height:44px;color:#161a22;font-weight:400;letter-spacing:0.6px;">Adjunct)</div>
<div class="a" style="left:0px;top:549.5px;width:2238px;height:2px;background:#e3e5e9"></div>
<div class="t " style="left:49px;top:578.00px;font-size:28px;line-height:44px;color:#161a22;font-weight:400;letter-spacing:0px;">4</div>
<div class="a" style="left:140px;top:592.4000000000001px;width:16px;height:16px;border-radius:50%;background:#4b86d9"></div>
<div class="t " style="left:181px;top:578.00px;font-size:28px;line-height:44px;color:#161a22;font-weight:400;letter-spacing:0.3px;">2015</div>
<div class="t " style="left:500.5px;top:578.00px;font-size:28px;line-height:44px;color:#3867b9;font-weight:400;letter-spacing:0.6px;"><span class="hp">Virtual</span> <span class="hv">Reality</span> in Medicine</div>
<div class="t " style="left:1220px;top:578.00px;font-size:28px;line-height:44px;color:#3867b9;font-weight:400;letter-spacing:0.6px;">link.springer.com</div>
<div class="t " style="left:1700.5px;top:578.00px;font-size:28px;line-height:44px;color:#3867b9;font-weight:400;letter-spacing:0.6px;">Claudio Pensieri,</div>
<div class="t " style="left:1700.5px;top:622.00px;font-size:28px;line-height:44px;color:#3867b9;font-weight:400;letter-spacing:0.6px;">Maddalena</div>
<div class="t " style="left:1700.5px;top:666.00px;font-size:28px;line-height:44px;color:#3867b9;font-weight:400;letter-spacing:0.6px;">Pennacchini</div>
<div class="t " style="left:2080px;top:578.00px;font-size:28px;line-height:44px;color:#161a22;font-weight:400;letter-spacing:0.6px;">Progress in IS</div>
<div class="a" style="left:0px;top:866px;width:2238px;height:2px;background:#e3e5e9"></div>
<div class="t " style="left:49px;top:894.50px;font-size:28px;line-height:44px;color:#161a22;font-weight:400;letter-spacing:0px;">5</div>
<div class="a" style="left:140px;top:908.9000000000001px;width:16px;height:16px;border-radius:50%;background:#4b86d9"></div>
<div class="t " style="left:181px;top:894.50px;font-size:28px;line-height:44px;color:#161a22;font-weight:400;letter-spacing:0.3px;">2001</div>
<div class="t " style="left:500.5px;top:894.50px;font-size:28px;line-height:44px;color:#3867b9;font-weight:400;letter-spacing:0px;"><span class="cj">关</span><span class="cj">于</span><span style="padding-left:5px">“</span><span class="hp">Virtual</span><span style="letter-spacing:0.6px"> </span><span class="hv">Reality</span><span style="padding-right:5px">”</span><span class="cj">概</span><span class="cj">念</span><span class="cj">问</span><span class="cj">题</span><span class="cj">的</span><span class="cj">研</span><span class="cj">究</span><span class="cj">综</span><span class="cj">述</span></div>
<div class="t " style="left:1220px;top:894.50px;font-size:28px;line-height:44px;color:#161a22;font-weight:400;letter-spacing:0.6px;">–</div>
<div class="t " style="left:1700.5px;top:894.50px;font-size:28px;line-height:44px;color:#3867b9;font-weight:400;letter-spacing:0px;"><span class="cj">康</span><span class="cj">敏</span></div>
<div class="t " style="left:2080px;top:894.50px;font-size:28px;line-height:44px;color:#161a22;font-weight:400;letter-spacing:0px;"><span class="cj">自</span><span class="cj">然</span><span class="cj">辩</span><span class="cj">证</span><span class="cj">法</span><span class="cj">研</span><span class="cj">究</span></div>
</div>
<div class="a" style="left:3278px;top:288px;width:20px;height:1026px;background:#f8f8f8;border-left:2px solid #e4e4e6;box-sizing:border-box"></div>
<div class="a" style="left:3286px;top:294px;width:14px;height:335px;background:#c1c1c1;border-radius:7px"></div>
<div class="a" style="left:1016.3px;top:260.2px;width:47.4px;height:47.4px;box-sizing:border-box;border:2px solid #b0b3bb;border-radius:50%;background:#fff"></div>
<svg class="a" style="left:1028px;top:270px;" width="24" height="28" viewBox="0 0 24 28"><polyline points="15.2,5.2 5.8,14.3 15.2,23.4" fill="none" stroke="#3564c2" stroke-width="3" stroke-linecap="round" stroke-linejoin="round"/></svg>
</body></html>
